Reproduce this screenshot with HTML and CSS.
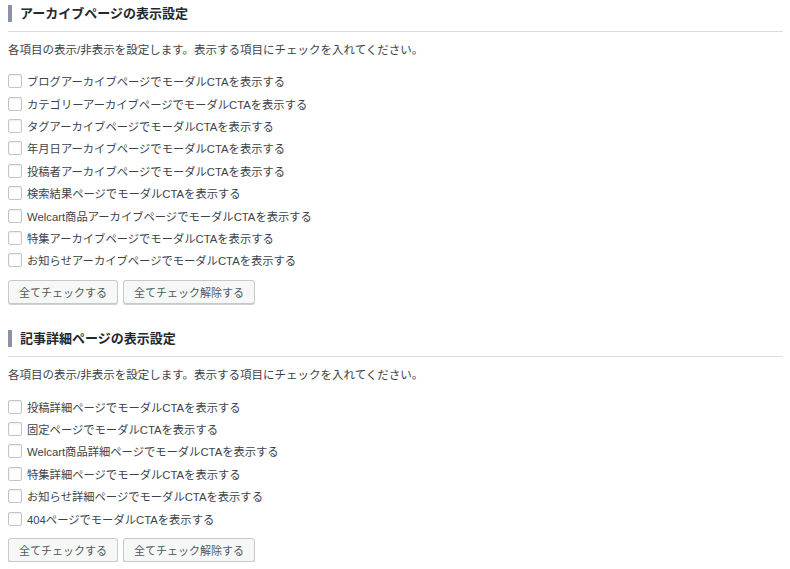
FILE: index.html
```html
<!DOCTYPE html>
<html lang="ja">
<head>
<meta charset="utf-8">
<title>表示設定</title>
<link rel="stylesheet" href="styles.css">
</head>
<body>
<section class="section">
  <div class="head"><h2 class="title">アーカイブページの表示設定</h2></div>
  <p class="desc">各項目の表示/非表示を設定します。表示する項目にチェックを入れてください。</p>
  <ul class="list">
    <li><label class="item"><input type="checkbox" class="cb">ブログアーカイブページでモーダルCTAを表示する</label></li>
    <li><label class="item"><input type="checkbox" class="cb">カテゴリーアーカイブページでモーダルCTAを表示する</label></li>
    <li><label class="item"><input type="checkbox" class="cb">タグアーカイブページでモーダルCTAを表示する</label></li>
    <li><label class="item"><input type="checkbox" class="cb">年月日アーカイブページでモーダルCTAを表示する</label></li>
    <li><label class="item"><input type="checkbox" class="cb">投稿者アーカイブページでモーダルCTAを表示する</label></li>
    <li><label class="item"><input type="checkbox" class="cb">検索結果ページでモーダルCTAを表示する</label></li>
    <li><label class="item"><input type="checkbox" class="cb">Welcart商品アーカイブページでモーダルCTAを表示する</label></li>
    <li><label class="item"><input type="checkbox" class="cb">特集アーカイブページでモーダルCTAを表示する</label></li>
    <li><label class="item"><input type="checkbox" class="cb">お知らせアーカイブページでモーダルCTAを表示する</label></li>
  </ul>
  <div class="buttons">
    <button class="btn" type="button">全てチェックする</button>
    <button class="btn" type="button">全てチェック解除する</button>
  </div>
</section>
<section class="section">
  <div class="head"><h2 class="title">記事詳細ページの表示設定</h2></div>
  <p class="desc">各項目の表示/非表示を設定します。表示する項目にチェックを入れてください。</p>
  <ul class="list">
    <li><label class="item"><input type="checkbox" class="cb">投稿詳細ページでモーダルCTAを表示する</label></li>
    <li><label class="item"><input type="checkbox" class="cb">固定ページでモーダルCTAを表示する</label></li>
    <li><label class="item"><input type="checkbox" class="cb">Welcart商品詳細ページでモーダルCTAを表示する</label></li>
    <li><label class="item"><input type="checkbox" class="cb">特集詳細ページでモーダルCTAを表示する</label></li>
    <li><label class="item"><input type="checkbox" class="cb">お知らせ詳細ページでモーダルCTAを表示する</label></li>
    <li><label class="item"><input type="checkbox" class="cb">404ページでモーダルCTAを表示する</label></li>
  </ul>
  <div class="buttons">
    <button class="btn" type="button">全てチェックする</button>
    <button class="btn" type="button">全てチェック解除する</button>
  </div>
</section>
</body>
</html>
```

FILE: styles.css
```css
html, body {
  background: #fff;
}
body {
  margin: 0 7px 0 8px;
  font-family: "Liberation Sans", "Noto Sans CJK JP", sans-serif;
  font-size: 11.5px;
  color: #3c434a;
}
.section {
  padding-top: 5px;
}
.section + .section {
  margin-top: 21.5px;
}
.head {
  border-bottom: 1px solid #dcdcde;
  padding-bottom: 9px;
}
.title {
  margin: 0;
  font-size: 13px;
  font-weight: bold;
  line-height: 17px;
  color: #23282d;
  border-left: 4px solid #8a92a6;
  padding-left: 8px;
}
.desc {
  margin: 8px 0 0;
  line-height: 20px;
}
.list {
  list-style: none;
  margin: 10px 0 0;
  padding: 0;
}
.list li {
  height: 22.4px;
  display: flex;
  align-items: center;
}
.item {
  display: flex;
  align-items: center;
  gap: 5px;
  font-size: 11.3px;
}
.cb {
  appearance: none;
  -webkit-appearance: none;
  margin: 0;
  width: 14px;
  height: 14px;
  border: 1px solid #c3c4c7;
  border-radius: 2px;
  background: #fff;
  box-shadow: inset 0 1px 2px rgba(0,0,0,0.08);
}
.buttons {
  margin-top: 8.4px;
  display: flex;
  gap: 5px;
}
.btn {
  height: 24px;
  padding: 0 10px;
  font-family: inherit;
  font-size: 11px;
  color: #50575e;
  background: #f6f7f7;
  border: 1px solid #c8c8c8;
  border-radius: 3px;
  box-shadow: 0 1px 0 #d0d0d0;
}
```
